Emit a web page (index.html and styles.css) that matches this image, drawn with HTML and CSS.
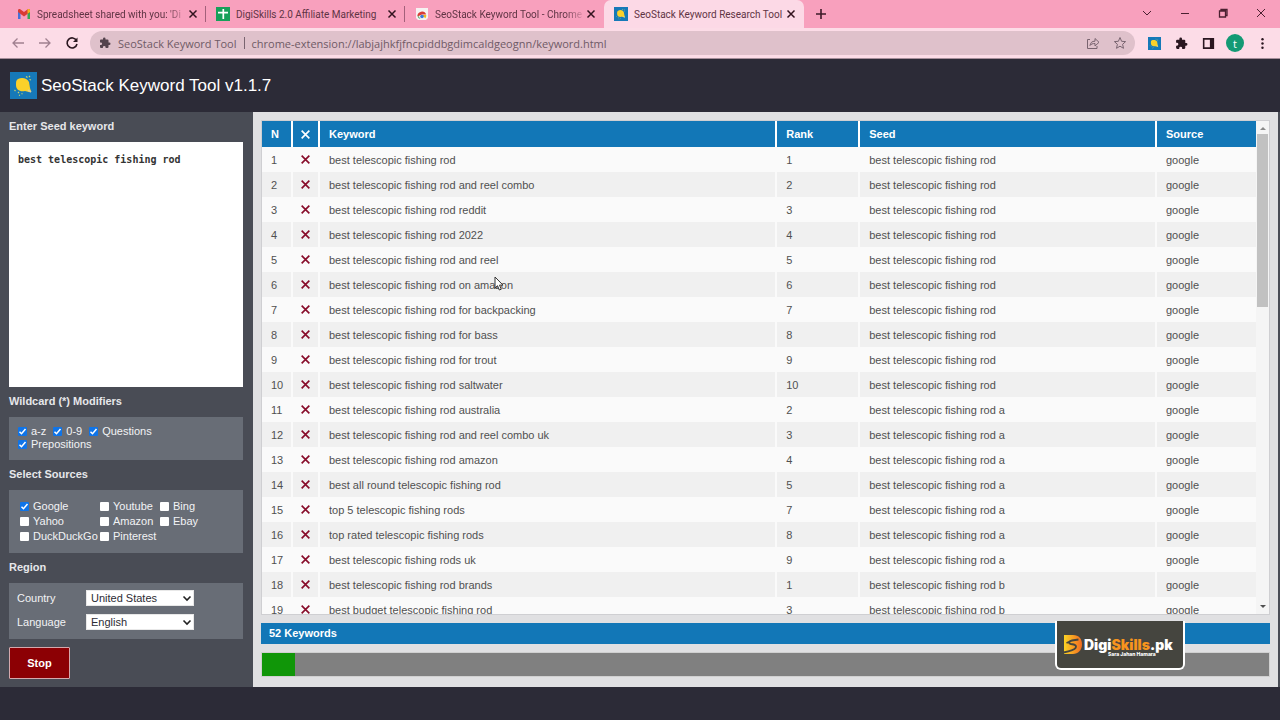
FILE: index.html
```html
<!DOCTYPE html>
<html lang="en">
<head>
<meta charset="utf-8">
<title>SeoStack Keyword Research Tool</title>
<link rel="stylesheet" href="styles.css">
</head>
<body>
<svg class="defs" aria-hidden="true">
  <symbol id="x" viewBox="0 0 10 10"><path d="M1.500 1.500l7 7M8.500 1.500l-7 7" fill="none" stroke="currentColor" stroke-width="1.500"/></symbol>
  <symbol id="bulb" viewBox="0 0 27 27"><rect width="27" height="27" fill="#1679b8"/><path d="M8 7c4-2 9-1 11 3l1 6 1 3-2 1-4-1c-5 1-9-1-9-6 0-3 0-5 2-6z" fill="#fbd12a"/><path d="M18 18l3 2" stroke="#d9cf9b" stroke-width="2"/><path d="M16 4.500l1.500 1M19 4l1 1M19.500 7.500l1.500.5M4.500 18l1 1M8 20l1 1M11.500 21.500l1 .5M9 23l1 .5" stroke="#c9d36b" stroke-width="1.200"/></symbol>
  <symbol id="puzzle" viewBox="0 0 24 24"><path fill="currentColor" d="M20.500 11H19V7a2 2 0 0 0-2-2h-4V3.500a2.500 2.500 0 0 0-5 0V5H4a2 2 0 0 0-2 2v3.800h1.500a2.700 2.700 0 0 1 0 5.400H2V20a2 2 0 0 0 2 2h3.800v-1.500a2.700 2.700 0 0 1 5.400 0V22H17a2 2 0 0 0 2-2v-4h1.500a2.500 2.500 0 0 0 0-5z"/></symbol>
</svg>

<div class="tabs">
  <div class="tab">
    <svg class="fav" viewBox="0 0 14 14"><path d="M1 12V3.500l2.500 1.800V12z" fill="#4670d8"/><path d="M10.500 12V5.300L13 3.500V12z" fill="#36a852"/><path d="M1 3.500C1 2 2.500 1.600 3.600 2.500L7 5l3.400-2.500C11.500 1.600 13 2 13 3.500V5L7 9.400 1 5z" fill="#d93b34"/><path d="M10.500 2.500C12 1.500 13 2.400 13 3.500V5l-2.500 1.800z" fill="#f3b51c"/></svg>
    <span class="tab-title faded">Spreadsheet shared with you: 'Di</span>
    <button class="plain close" aria-label="Close tab"><svg><use href="#x"/></svg></button>
  </div>
  <div class="tab">
    <svg class="fav" viewBox="0 0 14 14"><rect width="14" height="14" fill="#17a05a"/><path d="M7.300 2v10M2 5.600h10" stroke="#fff" stroke-width="1.700"/></svg>
    <span class="tab-title">DigiSkills 2.0 Affiliate Marketing</span>
    <button class="plain close" aria-label="Close tab"><svg><use href="#x"/></svg></button>
  </div>
  <div class="tab last">
    <svg class="fav" viewBox="0 0 14 14"><path d="M1 1h12v10l-2 2H3l-2-2z" fill="#f6f2f2"/><path d="M2.500 9.500a4.500 4.500 0 0 1 8.700-2H7z" fill="#d83c36"/><path d="M2.500 8l3 4-2-1z" fill="#2f9e4f"/><path d="M7 8h4.300a4.500 4.500 0 0 1-1 3.200z" fill="#efba1c"/><circle cx="7" cy="9.500" r="1.800" fill="#3c78d8"/></svg>
    <span class="tab-title faded">SeoStack Keyword Tool - Chrome</span>
    <button class="plain close" aria-label="Close tab"><svg><use href="#x"/></svg></button>
  </div>
  <div class="tab active">
    <svg class="fav"><use href="#bulb"/></svg>
    <span class="tab-title">SeoStack Keyword Research Tool</span>
    <button class="plain close" aria-label="Close tab"><svg><use href="#x"/></svg></button>
  </div>
  <button class="plain new-tab" aria-label="New tab"><svg viewBox="0 0 12 12"><path d="M6 1v10M1 6h10" stroke="#3d1a28" stroke-width="1.600"/></svg></button>
  <div class="window-buttons">
    <button class="plain" aria-label="Search tabs"><svg viewBox="0 0 12 12"><path d="M2 4l4 4 4-4"/></svg></button>
    <button class="plain" aria-label="Minimize"><svg viewBox="0 0 12 12"><path d="M2 6.500h8"/></svg></button>
    <button class="plain" aria-label="Restore"><svg viewBox="0 0 12 12"><path d="M2.500 4h6v6h-6zM4 3.500V2.500h6v6H9" stroke-width="1.300"/></svg></button>
    <button class="plain" aria-label="Close"><svg viewBox="0 0 12 12"><path d="M2 2l8 8M10 2l-8 8"/></svg></button>
  </div>
</div>

<div class="toolbar">
  <button class="plain nav" aria-label="Back"><svg viewBox="0 0 14 14"><path d="M13 7H2M6.500 2.500L2 7l4.500 4.500"/></svg></button>
  <button class="plain nav" aria-label="Forward"><svg viewBox="0 0 14 14"><path d="M1 7h11M7.500 2.500L12 7l-4.500 4.500"/></svg></button>
  <button class="plain nav reload" aria-label="Reload"><svg viewBox="0 0 14 14"><path d="M11.500 4.500A5 5 0 1 0 12 8"/><path d="M12.500 1.500v4.500H8z" fill="#2b1821" stroke="none"/></svg></button>
  <div class="address">
    <svg class="ext"><use href="#puzzle"/></svg>
    <span>SeoStack Keyword Tool</span><span class="bar"></span><span>chrome-extension://labjajhkfjfncpiddbgdimcaldgeognn/keyword.html</span>
    <span class="address-actions">
      <button class="plain" aria-label="Share"><svg viewBox="0 0 14 14"><path d="M4 3.500H1.500v9h9.500V10M4 9.500c.5-3 2-4.300 5-4.300V2.500L13 6.300 9 10V7.500c-2.500 0-3.800.5-5 2z"/></svg></button>
      <button class="plain" aria-label="Bookmark"><svg viewBox="0 0 14 14"><path d="M7 1.500l1.600 3.800 4 .3-3 2.700.9 4L7 10.200l-3.500 2.100.9-4-3-2.700 4-.3z"/></svg></button>
    </span>
  </div>
  <div class="extensions">
    <button class="plain" aria-label="SeoStack"><svg><use href="#bulb"/></svg></button>
    <button class="plain" aria-label="Extensions"><svg><use href="#puzzle"/></svg></button>
    <button class="plain" aria-label="Side panel"><svg viewBox="0 0 14 14"><path d="M1.800 2h10.400v10H1.800z" fill="none" stroke="currentColor" stroke-width="1.700"/><path d="M8.500 2H12v10H8.500z" fill="currentColor"/></svg></button>
    <button class="plain avatar" aria-label="Profile">t</button>
    <button class="plain" aria-label="Menu"><svg viewBox="0 0 14 14" fill="currentColor"><circle cx="7" cy="2.500" r="1.300"/><circle cx="7" cy="7" r="1.300"/><circle cx="7" cy="11.500" r="1.300"/></svg></button>
  </div>
</div>

<header class="header">
  <svg class="logo"><use href="#bulb"/></svg>
  <h1>SeoStack Keyword Tool v1.1.7</h1>
</header>

<main class="main">
  <form class="side">
    <label class="heading" for="seed">Enter Seed keyword</label>
    <textarea id="seed" spellcheck="false">best telescopic fishing rod</textarea>
    <h2 class="heading">Wildcard (*) Modifiers</h2>
    <div class="box modifiers">
      <label><input type="checkbox" checked>a-z</label>
      <label><input type="checkbox" checked>0-9</label>
      <label><input type="checkbox" checked>Questions</label>
      <label><input type="checkbox" checked>Prepositions</label>
    </div>
    <h2 class="heading">Select Sources</h2>
    <div class="box sources">
      <label><input type="checkbox" checked>Google</label>
      <label><input type="checkbox">Youtube</label>
      <label><input type="checkbox">Bing</label>
      <label><input type="checkbox">Yahoo</label>
      <label><input type="checkbox">Amazon</label>
      <label><input type="checkbox">Ebay</label>
      <label><input type="checkbox">DuckDuckGo</label>
      <label><input type="checkbox">Pinterest</label>
    </div>
    <h2 class="heading">Region</h2>
    <div class="box region">
      <label for="country">Country</label>
      <span class="select"><select id="country"><option>United States</option></select><svg viewBox="0 0 10 10"><path d="M1.500 3.500L5 7l3.500-3.500"/></svg></span>
      <label for="language">Language</label>
      <span class="select"><select id="language"><option>English</option></select><svg viewBox="0 0 10 10"><path d="M1.500 3.500L5 7l3.500-3.500"/></svg></span>
    </div>
    <button type="button" class="stop">Stop</button>
  </form>

  <section class="content">
    <div class="results">
      <div class="table-wrap">
        <table>
          <colgroup><col class="c-n"><col class="c-x"><col class="c-key"><col class="c-rank"><col class="c-seed"><col class="c-source"></colgroup>
          <thead><tr><th>N</th><th class="del"><svg><use href="#x"/></svg></th><th>Keyword</th><th>Rank</th><th>Seed</th><th>Source</th></tr></thead>
          <tbody>
            <tr><td>1</td><td class="del"><button class="plain" aria-label="Remove"><svg><use href="#x"/></svg></button></td><td>best telescopic fishing rod</td><td>1</td><td>best telescopic fishing rod</td><td>google</td></tr>
            <tr><td>2</td><td class="del"><button class="plain" aria-label="Remove"><svg><use href="#x"/></svg></button></td><td>best telescopic fishing rod and reel combo</td><td>2</td><td>best telescopic fishing rod</td><td>google</td></tr>
            <tr><td>3</td><td class="del"><button class="plain" aria-label="Remove"><svg><use href="#x"/></svg></button></td><td>best telescopic fishing rod reddit</td><td>3</td><td>best telescopic fishing rod</td><td>google</td></tr>
            <tr><td>4</td><td class="del"><button class="plain" aria-label="Remove"><svg><use href="#x"/></svg></button></td><td>best telescopic fishing rod 2022</td><td>4</td><td>best telescopic fishing rod</td><td>google</td></tr>
            <tr><td>5</td><td class="del"><button class="plain" aria-label="Remove"><svg><use href="#x"/></svg></button></td><td>best telescopic fishing rod and reel</td><td>5</td><td>best telescopic fishing rod</td><td>google</td></tr>
            <tr><td>6</td><td class="del"><button class="plain" aria-label="Remove"><svg><use href="#x"/></svg></button></td><td>best telescopic fishing rod on amazon</td><td>6</td><td>best telescopic fishing rod</td><td>google</td></tr>
            <tr><td>7</td><td class="del"><button class="plain" aria-label="Remove"><svg><use href="#x"/></svg></button></td><td>best telescopic fishing rod for backpacking</td><td>7</td><td>best telescopic fishing rod</td><td>google</td></tr>
            <tr><td>8</td><td class="del"><button class="plain" aria-label="Remove"><svg><use href="#x"/></svg></button></td><td>best telescopic fishing rod for bass</td><td>8</td><td>best telescopic fishing rod</td><td>google</td></tr>
            <tr><td>9</td><td class="del"><button class="plain" aria-label="Remove"><svg><use href="#x"/></svg></button></td><td>best telescopic fishing rod for trout</td><td>9</td><td>best telescopic fishing rod</td><td>google</td></tr>
            <tr><td>10</td><td class="del"><button class="plain" aria-label="Remove"><svg><use href="#x"/></svg></button></td><td>best telescopic fishing rod saltwater</td><td>10</td><td>best telescopic fishing rod</td><td>google</td></tr>
            <tr><td>11</td><td class="del"><button class="plain" aria-label="Remove"><svg><use href="#x"/></svg></button></td><td>best telescopic fishing rod australia</td><td>2</td><td>best telescopic fishing rod a</td><td>google</td></tr>
            <tr><td>12</td><td class="del"><button class="plain" aria-label="Remove"><svg><use href="#x"/></svg></button></td><td>best telescopic fishing rod and reel combo uk</td><td>3</td><td>best telescopic fishing rod a</td><td>google</td></tr>
            <tr><td>13</td><td class="del"><button class="plain" aria-label="Remove"><svg><use href="#x"/></svg></button></td><td>best telescopic fishing rod amazon</td><td>4</td><td>best telescopic fishing rod a</td><td>google</td></tr>
            <tr><td>14</td><td class="del"><button class="plain" aria-label="Remove"><svg><use href="#x"/></svg></button></td><td>best all round telescopic fishing rod</td><td>5</td><td>best telescopic fishing rod a</td><td>google</td></tr>
            <tr><td>15</td><td class="del"><button class="plain" aria-label="Remove"><svg><use href="#x"/></svg></button></td><td>top 5 telescopic fishing rods</td><td>7</td><td>best telescopic fishing rod a</td><td>google</td></tr>
            <tr><td>16</td><td class="del"><button class="plain" aria-label="Remove"><svg><use href="#x"/></svg></button></td><td>top rated telescopic fishing rods</td><td>8</td><td>best telescopic fishing rod a</td><td>google</td></tr>
            <tr><td>17</td><td class="del"><button class="plain" aria-label="Remove"><svg><use href="#x"/></svg></button></td><td>best telescopic fishing rods uk</td><td>9</td><td>best telescopic fishing rod a</td><td>google</td></tr>
            <tr><td>18</td><td class="del"><button class="plain" aria-label="Remove"><svg><use href="#x"/></svg></button></td><td>best telescopic fishing rod brands</td><td>1</td><td>best telescopic fishing rod b</td><td>google</td></tr>
            <tr><td>19</td><td class="del"><button class="plain" aria-label="Remove"><svg><use href="#x"/></svg></button></td><td>best budget telescopic fishing rod</td><td>3</td><td>best telescopic fishing rod b</td><td>google</td></tr>
          </tbody>
        </table>
      </div>
      <div class="scrollbar" aria-hidden="true">
        <svg viewBox="0 0 12 12"><path d="M3 8l3-3 3 3z" fill="#8a8a8a"/></svg>
        <span class="track"><span class="thumb"></span></span>
        <svg viewBox="0 0 12 12"><path d="M3 4l3 3 3-3z" fill="#505050"/></svg>
      </div>
    </div>
    <div class="count">52 Keywords</div>
    <div class="progress"><div class="done"></div></div>
    <div class="watermark">
      <svg viewBox="0 0 20 20"><defs><linearGradient id="g"><stop offset="0" stop-color="#fbd324"/><stop offset="1" stop-color="#f26a21"/></linearGradient></defs><path d="M1 0h9c6 0 9 4 9 9.500S15 19 10 19H1z" fill="url(#g)"/><path d="M15.500 4.500L9 5.500c-3.500.8-4 2.800-1 3.500 4 .6 6 1.200 4.500 4-1 1.700-5 3-12 4.500M9 5.500L3.500 8" fill="none" stroke="#45453f" stroke-width="1.800"/></svg>
      <div class="brand"><div class="brand-name">Digi<b>Skills</b>.pk</div><div class="tagline">Sara Jahan Hamara</div></div>
    </div>
  </section>
</main>
<svg class="cursor" viewBox="0 0 10 15" aria-hidden="true"><path d="M1 1v11l2.500-2.300L5.300 14l2-.8-1.800-4.100H9z" fill="#fff" stroke="#333"/></svg>
</body>
</html>
```

FILE: styles.css
```css
* { box-sizing: border-box; }
body {
  margin: 0;
  height: 100vh;
  display: flex;
  flex-direction: column;
  overflow: hidden;
  background: #2c2b37;
  font-family: "Liberation Sans", Arial, sans-serif;
  font-size: 11px;
}
svg { display: block; flex: none; }
.defs { position: absolute; width: 0; height: 0; }
.plain {
  display: flex;
  align-items: center;
  justify-content: center;
  padding: 0;
  border: 0;
  background: none;
  color: inherit;
  font: inherit;
}

/* Browser tabs */
.tabs {
  display: flex;
  height: 28px;
  padding-left: 7px;
  background: #f8a0bd;
  color: #5f3444;
  font-family: Roboto, sans-serif;
  font-size: 10px;
}
.tab {
  display: flex;
  align-items: center;
  width: 199px;
  padding: 0 8px 0 10px;
  background: linear-gradient(#a3607a, #a3607a) right center / 1px 16px no-repeat;
}
.tab.last { background: none; }
.tab.active {
  width: 200px;
  background: #fcd9e6;
  border-radius: 7px 7px 0 0;
}
.fav { width: 14px; height: 14px; margin-right: 6px; }
.tab-title { flex: 1; white-space: nowrap; }
.faded { mask-image: linear-gradient(to right, #000 86%, transparent); }
.close svg { width: 10px; height: 10px; color: #33131f; }
.new-tab { width: 34px; }
.new-tab svg { width: 12px; height: 12px; }
.window-buttons { display: flex; margin-left: auto; }
.window-buttons button { width: 38px; height: 26px; }
.window-buttons svg { width: 12px; height: 12px; fill: none; stroke: #4a2030; }

/* Browser toolbar */
.toolbar {
  display: flex;
  align-items: center;
  height: 31px;
  padding: 0 9px 0 4px;
  background: #fcdce7;
  border-bottom: 1px solid #a58e9a;
  font-family: "Open Sans", sans-serif;
}
.nav { width: 27px; height: 24px; }
.nav svg { width: 14px; height: 14px; fill: none; stroke: #a08090; stroke-width: 1.3; }
.nav.reload svg { stroke: #2b1821; stroke-width: 1.6; }
.address {
  flex: 1;
  display: flex;
  align-items: center;
  height: 24px;
  margin-left: 5px;
  padding: 0 8px 0 9px;
  border-radius: 12px;
  background: #dfc1cb;
  color: #6f5a66;
  white-space: nowrap;
}
.ext { width: 12px; height: 12px; margin-right: 7px; color: #54434d; }
.bar { width: 1px; height: 12px; margin: 0 7px; background: #796470; }
.address-actions { display: flex; gap: 13px; margin-left: auto; }
.address-actions svg { width: 14px; height: 14px; fill: none; stroke: #796470; }
.extensions {
  display: flex;
  align-items: center;
  gap: 9px;
  margin-left: 10px;
  color: #2a1620;
}
.extensions button { width: 18px; height: 20px; }
.extensions svg { width: 13px; height: 13px; }
.extensions .avatar {
  height: 18px;
  border-radius: 50%;
  background: #139a74;
  color: #fff;
}

/* Page header */
.header {
  display: flex;
  align-items: center;
  gap: 4px;
  height: 53px;
  padding-left: 10px;
  color: #fff;
}
.logo { width: 27px; height: 27px; }
h1 { margin: 0; font-size: 17px; font-weight: 400; }

.main {
  flex: 1;
  display: flex;
  min-height: 0;
  margin-bottom: 33px;
  padding-right: 2px;
  background: #494c55;
}

/* Settings column */
.side {
  display: flex;
  flex-direction: column;
  width: 253px;
  padding: 8px 10px 8px 9px;
  background: #494c55;
  color: #f2f3f5;
}
.heading {
  margin: 0;
  font-size: 11px;
  font-weight: 700;
  line-height: 13px;
  color: #e6e7ea;
}
textarea {
  flex: 1;
  margin: 9px 0 8px;
  padding: 12px 9px;
  border: 0;
  resize: none;
  background: #fff;
  color: #333;
  font: bold 10px/12px "DejaVu Sans Mono", monospace;
}
.box {
  margin: 9px 0 8px;
  background: #686d76;
}
input {
  appearance: none;
  width: 9px;
  height: 9px;
  margin: 0 4px 0 0;
  border-radius: 1px;
  background: #fff;
}
input:checked {
  background: #0f74e8 url("data:image/svg+xml,%3Csvg xmlns='http://www.w3.org/2000/svg' viewBox='0 0 9 9'%3E%3Cpath d='M1.500 4.700l2 2 4-4.700' fill='none' stroke='white' stroke-width='1.500'/%3E%3C/svg%3E");
}
.box label { display: flex; align-items: center; }
.modifiers {
  display: flex;
  flex-wrap: wrap;
  column-gap: 7px;
  padding: 8px 60px 9px 9px;
  line-height: 13px;
}
.sources {
  display: grid;
  grid-template-columns: 80px 60px 50px;
  padding: 9px 11px;
  line-height: 15px;
  white-space: nowrap;
}
.region {
  display: grid;
  grid-template-columns: 69px 108px;
  row-gap: 8px;
  padding: 7px 8px 9px;
}
.select { position: relative; }
select {
  appearance: none;
  display: block;
  width: 100%;
  height: 16px;
  padding: 0 4px;
  border: 1px solid #e8e8e8;
  border-radius: 0;
  background: #fff;
  color: #2c2c34;
  font: 11px/14px "Liberation Sans", Arial, sans-serif;
}
.select svg {
  position: absolute;
  top: 3px;
  right: 2px;
  width: 10px;
  height: 10px;
  fill: none;
  stroke: #222;
  stroke-width: 1.6;
  pointer-events: none;
}
.stop {
  width: 61px;
  height: 32px;
  padding-bottom: 2px;
  border: 1px solid #d5a9ad;
  border-radius: 1px;
  background: #8c0004;
  color: #fff;
  font: bold 11px "Liberation Sans", Arial, sans-serif;
}

/* Results */
.content {
  position: relative;
  flex: 1;
  display: flex;
  flex-direction: column;
  gap: 8px;
  min-width: 0;
  padding: 8px 8px 10px;
  background: #e0e0e2;
}
.results {
  flex: 1;
  display: flex;
  min-height: 0;
  border: 1px solid #cfcfd2;
  background: #fff;
}
.table-wrap { flex: 1; overflow: hidden; }
table {
  width: 100%;
  border-collapse: collapse;
  table-layout: fixed;
  color: #505050;
}
.c-n { width: 30px; }
.c-x { width: 27px; }
.c-key { width: 46%; }
.c-rank { width: 83px; }
.c-source { width: 100px; }
th, td {
  height: 25px;
  padding: 0 0 0 9px;
  border-right: 2px solid #fafafa;
  text-align: left;
  white-space: nowrap;
}
th:last-child, td:last-child { border-right: 0; }
th {
  height: 26px;
  border-color: #fff;
  background: #1277b7;
  color: #fff;
}
tbody tr:nth-child(odd) { background: #fafafa; }
tbody tr:nth-child(even) { background: #f0f0f0; }
.del { padding: 0; }
.del svg { width: 11px; height: 11px; margin: 0 auto; }
.del button { width: 100%; color: #870c2a; }
.scrollbar {
  display: flex;
  flex-direction: column;
  align-items: center;
  width: 13px;
  padding: 1px 0;
  background: #f5f5f5;
}
.scrollbar svg { width: 12px; height: 12px; }
.track { flex: 1; width: 11px; }
.thumb { display: block; height: 37%; background: #c1c1c1; }
.count {
  height: 21px;
  padding-left: 8px;
  background: #1277b7;
  color: #fff;
  font-weight: 700;
  line-height: 21px;
}
.progress {
  height: 25px;
  border: 1px solid #d0d0d0;
  background: #808080;
}
.done { width: 33px; height: 100%; background: #109608; }

.watermark {
  position: absolute;
  right: 93px;
  bottom: 17px;
  display: flex;
  align-items: center;
  gap: 1px;
  width: 130px;
  height: 49px;
  padding-left: 6px;
  border: 2px solid #fff;
  border-top: 0;
  border-radius: 0 0 6px 6px;
  background: #45453f;
  color: #fff;
}
.watermark svg { width: 20px; height: 20px; }
.brand { padding-top: 4px; }
.brand-name {
  font: 900 14px/15px "Inter", sans-serif;
}
.brand-name b { color: #f7941d; font-weight: 900; }
.tagline {
  padding-left: 24px;
  font: 800 5px/5px "Inter", sans-serif;
}
.cursor {
  position: absolute;
  left: 494px;
  top: 276px;
  width: 10px;
  height: 15px;
}
```
